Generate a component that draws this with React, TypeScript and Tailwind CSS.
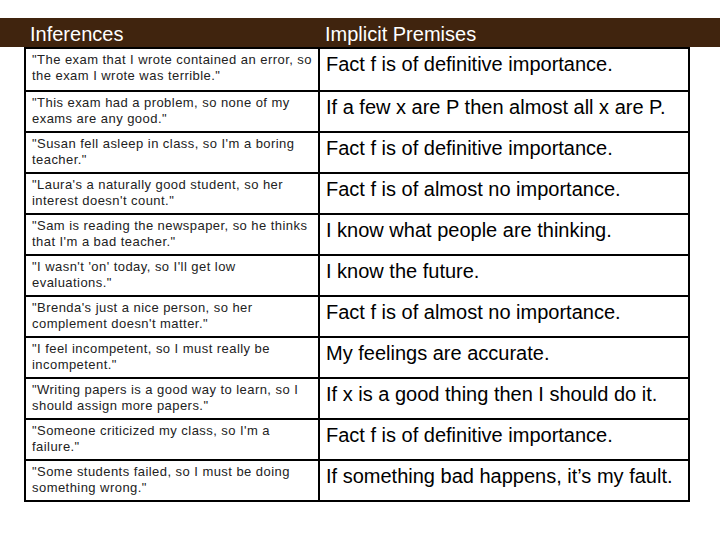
import React from "react";

const rows: [string, string, string][] = [
  ["\"The exam that I wrote contained an error, so", "the exam I wrote was terrible.\"", "Fact f is of definitive importance."],
  ["\"This exam had a problem, so none of my", "exams are any good.\"", "If a few x are P then almost all x are P."],
  ["\"Susan fell asleep in class, so I'm a boring", "teacher.\"", "Fact f is of definitive importance."],
  ["\"Laura's a naturally good student, so her", "interest doesn't count.\"", "Fact f is of almost no importance."],
  ["\"Sam is reading the newspaper, so he thinks", "that I'm a bad teacher.\"", "I know what people are thinking."],
  ["\"I wasn't 'on' today, so I'll get low", "evaluations.\"", "I know the future."],
  ["\"Brenda's just a nice person, so her", "complement doesn't matter.\"", "Fact f is of almost no importance."],
  ["\"I feel incompetent, so I must really be", "incompetent.\"", "My feelings are accurate."],
  ["\"Writing papers is a good way to learn, so I", "should assign more papers.\"", "If x is a good thing then I should do it."],
  ["\"Someone criticized my class, so I'm a", "failure.\"", "Fact f is of definitive importance."],
  ["\"Some students failed, so I must be doing", "something wrong.\"", "If something bad happens, it\u2019s my fault."],
];

export default function App() {
  return (
    <div className="w-[720px] h-[540px] bg-white overflow-hidden" style={{ fontFamily: '"Liberation Sans", Arial, sans-serif' }}>
      <div className="h-[18px]" />
      <div className="h-[29px] bg-[#40240e] flex items-center text-white text-[20px] leading-none pt-[2px]">
        <div className="w-[320px] pl-[30px]">Inferences</div>
        <div className="pl-[5px]">Implicit Premises</div>
      </div>
      <div className="ml-[24px] w-[666px] border-2 border-black">
        {rows.map((r, i) => (
          <div key={i} className={`flex h-[41px] ${i > 0 ? "border-t-2 border-black" : ""}`}>
            <div className="w-[294px] border-r-2 border-black pl-[6px] pt-[3px] text-[13px] leading-[16px] text-[#222222] tracking-[0.45px]">
              <div className="whitespace-nowrap">{r[0]}</div>
              <div className="whitespace-nowrap">{r[1]}</div>
            </div>
            <div className="flex-1 pl-[6px] pt-[3px] text-[20px] leading-[24px] text-black whitespace-nowrap">{r[2]}</div>
          </div>
        ))}
      </div>
    </div>
  );
}
